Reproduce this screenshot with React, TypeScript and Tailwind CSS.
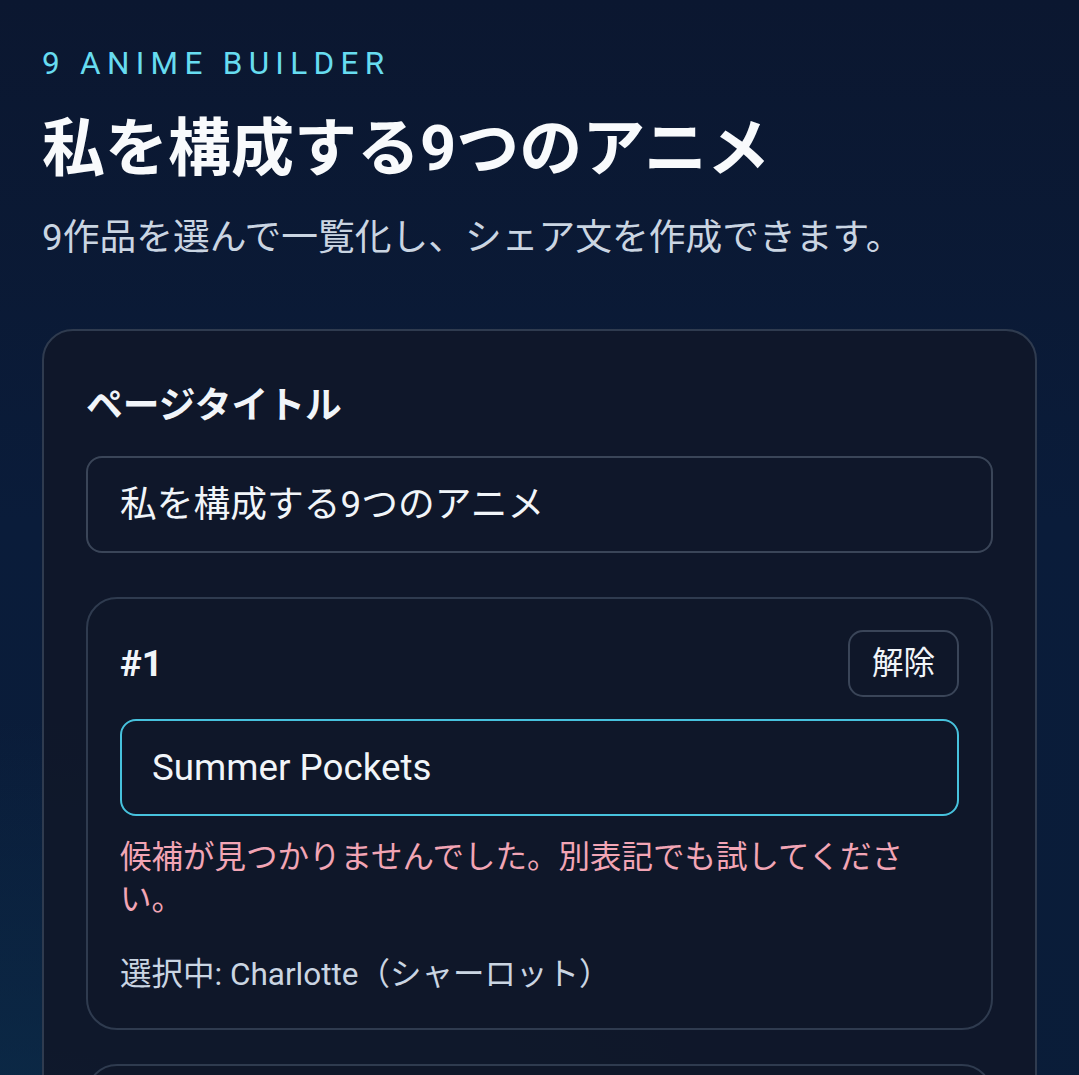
const font = { fontFamily: "Roboto, 'Noto Sans CJK JP', sans-serif" };

function ItemCard() {
  return (
    <div className="mt-[44px] rounded-[31px] border-2 border-[#2f3b4f] bg-[#0f1729] px-[32px] pt-[31px] pb-[32px]">
      <div className="flex items-center justify-between">
        <span className="text-[36.75px] font-bold leading-[55px] text-slate-100">#1</span>
        <button className="h-[67px] rounded-[15px] border-2 border-[#3a4558] px-[22px] text-[31.5px] leading-[42px] text-slate-100">
          解除
        </button>
      </div>
      <div className="mt-[22px] flex h-[97px] items-center rounded-[16px] border-[2.5px] border-[#47c2dd] px-[30px] text-[36.75px] text-slate-100">
        Summer Pockets
      </div>
      <p className="mt-[21px] text-[31.5px] leading-[42px] text-[#f2a5b5]">
        候補が見つかりませんでした。別表記でも試してください。
      </p>
      <p className="mt-[33px] text-[31.5px] leading-[42px] text-slate-300">
        選択中: Charlotte（シャーロット）
      </p>
    </div>
  );
}

export default function App() {
  return (
    <div
      style={font}
      className="min-h-[1075px] overflow-hidden bg-[#0a1931] bg-[radial-gradient(ellipse_70%_45%_at_0%_100%,#0c2f4d_0%,rgba(10,25,49,0)_100%),linear-gradient(180deg,#0b1730_0%,#0a1c3a_40%,#0a1d38_100%)] px-[42px] pt-[40px]"
    >
      <p className="text-[31.5px] leading-[47px] tracking-[0.2em] text-[#67dcf0]">9 ANIME BUILDER</p>
      <h1 className="mt-[20px] text-[63px] font-bold leading-[84px] text-slate-50">私を構成する9つのアニメ</h1>
      <p className="mt-[19px] text-[36.75px] leading-[55px] text-slate-300">
        9作品を選んで一覧化し、シェア文を作成できます。
      </p>

      <div className="mt-[64px] rounded-[31px] border-2 border-[#2f3b4f] bg-[#0f1729]/90 px-[42px] pt-[47px] pb-[40px]">
        <label className="block text-[36.75px] font-bold leading-[55px] text-slate-100">ページタイトル</label>
        <div className="mt-[23px] flex h-[97px] items-center rounded-[16px] border-2 border-[#3a4558] px-[32px] text-[36.75px] text-slate-100">
          私を構成する9つのアニメ
        </div>

        <ItemCard />

        <div className="mt-[34px] h-[200px] rounded-[31px] border-2 border-[#2f3b4f] bg-[#0f1729]" />
      </div>
    </div>
  );
}
